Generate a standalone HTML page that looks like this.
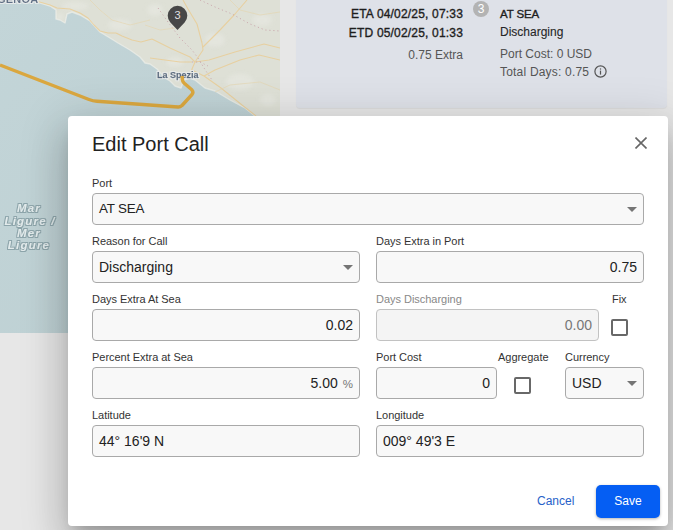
<!DOCTYPE html>
<html><head><meta charset="utf-8">
<style>
*{box-sizing:border-box;margin:0;padding:0}
html,body{width:673px;height:530px;overflow:hidden;background:#e7e7e7;font-family:"Liberation Sans",sans-serif;position:relative}
.abs{position:absolute}
#map{left:0;top:0;width:280px;height:333px;overflow:hidden;background:#bfd2d5}
#card{left:296px;top:-10px;width:371px;height:118px;background:#dee1e8;border-radius:4px;box-shadow:0 1px 1px rgba(0,0,0,0.05)}
.md{-webkit-text-stroke:0.35px currentColor}
.md2{-webkit-text-stroke:0.1px currentColor}
.ct{position:absolute;font-size:12px;white-space:nowrap;line-height:14px}
#dlg{left:68px;top:116px;width:600px;height:410px;background:#fff;border-radius:4px;box-shadow:0 11px 15px -7px rgba(0,0,0,0.2),0 24px 38px 3px rgba(0,0,0,0.14),0 9px 46px 8px rgba(0,0,0,0.12)}
.lbl{position:absolute;font-size:11px;color:#333;letter-spacing:-0.03px;white-space:nowrap;line-height:13px}
.inp{position:absolute;height:32px;border:1px solid #a9a9a9;border-radius:4px;background:#f8f8f8;font-size:14px;color:#222;line-height:30px;white-space:nowrap}
.arrow{position:absolute;width:0;height:0;border-left:5px solid transparent;border-right:5px solid transparent;border-top:5px solid #757575}
.cb{position:absolute;width:17px;height:17px;border:2px solid #686868;border-radius:2px;background:#fff}
</style></head>
<body>
<div id="map" class="abs">
<svg width="280" height="333" viewBox="0 0 280 333" style="position:absolute;left:0;top:0">
  <defs>
    <linearGradient id="wg" x1="0" y1="0" x2="1" y2="1">
      <stop offset="0" stop-color="#c3d5d8"/>
      <stop offset="1" stop-color="#bccfd2"/>
    </linearGradient>
    <filter id="halo" x="-20%" y="-20%" width="140%" height="140%">
      <feMorphology operator="dilate" radius="1" in="SourceAlpha" result="d"/>
      <feFlood flood-color="#e9ecec" flood-opacity="0.9"/>
      <feComposite in2="d" operator="in" result="h"/>
      <feMerge><feMergeNode in="h"/><feMergeNode in="SourceGraphic"/></feMerge>
    </filter>
    <filter id="halo2" x="-20%" y="-20%" width="140%" height="140%">
      <feMorphology operator="dilate" radius="0.8" in="SourceAlpha" result="d"/>
      <feFlood flood-color="#8aa2a8" flood-opacity="0.95"/>
      <feComposite in2="d" operator="in" result="h"/>
      <feMerge><feMergeNode in="h"/><feMergeNode in="SourceGraphic"/></feMerge>
    </filter>
  <filter id="blur2"><feGaussianBlur stdDeviation="2"/></filter>
    <clipPath id="landclip"><path d="M0,0 L27,0 L37,2 L50,6 L56,10 L56,19 L60,20 L65,23 L67,14 L72,12 L80,15 L90,21 L100,32 L110,38 L118,43 L130,50 L140,57 L145,63 L150,64 L157,69 L165,78 L170,81 L175,86 L181,88 L184,80 L190,78 L195,80 L205,88 L215,91 L230,100 L245,108 L255,116 L262,122 L280,135 L280,0 Z"/></clipPath>
  </defs>
  <rect width="280" height="333" fill="url(#wg)"/>
  <path d="M0,0 L27,0 L37,2 L50,6 L56,10 L56,19 L60,20 L65,23 L67,14 L72,12 L80,15 L90,21 L100,32 L110,38 L118,43 L130,50 L140,57 L145,63 L150,64 L157,69 L165,78 L170,81 L175,86 L181,88 L184,80 L190,78 L195,80 L205,88 L215,91 L230,100 L245,108 L255,116 L262,122 L280,135 L280,0 Z" fill="#dee0d6"/>
  <g fill="#e9eae4" opacity="0.55" filter="url(#blur2)" clip-path="url(#landclip)">
    <ellipse cx="75" cy="6" rx="14" ry="4"/>
    <ellipse cx="120" cy="25" rx="12" ry="6"/>
    <ellipse cx="155" cy="10" rx="8" ry="6"/>
    <ellipse cx="215" cy="40" rx="10" ry="7"/>
    <ellipse cx="240" cy="82" rx="14" ry="8"/>
    <ellipse cx="262" cy="20" rx="10" ry="6"/>
    <ellipse cx="175" cy="62" rx="9" ry="5"/>
    <ellipse cx="60" cy="17" rx="4" ry="4"/>
    <ellipse cx="268" cy="100" rx="8" ry="6"/>
  </g>
  <polyline points="27,0 37,2 50,6 56,10 56,19 60,20 65,23 67,14 72,12 80,15 90,21 100,32 110,38 118,43 130,50 140,57 145,63 150,64 157,69 165,78 170,81 175,86 181,88 184,80 190,78 195,80 205,88 215,91 230,100 245,108 255,116 262,122 280,135" fill="none" stroke="#eef0ea" stroke-width="1.4" opacity="0.7" stroke-linejoin="round"/>
  <g fill="none" stroke="#ebc98a" stroke-width="1.1" stroke-linejoin="round" opacity="0.7">
    <path d="M36,1 L50,5 L57,8 L70,9 L80,13 L88,18 L94,25 L100,31 L108,33 L116,33 L122,36 L132,40 L141,42 L152,39 L170,48 L190,57 L195,62"/>
    <path d="M183,0 L188,9 L197,24 L202,43 L203,50 L195,62 L192,69 L190,76"/>
    <path d="M203,47 L220,30 L235,14 L247,0"/>
    <path d="M195,62 L209,60 L235,52 L264,44 L280,48"/>
    <path d="M192,70 L204,76 L221,88 L242,105 L256,116"/>
    <path d="M204,76 L215,70 L240,60 L259,55 L280,60"/>
    <path d="M150,58 L165,60 L180,62 L192,62"/>
  </g>
  <g fill="none" stroke="#e5d6b0" stroke-width="0.8" opacity="0.8">
    <path d="M90,0 L100,10 L112,20 L130,25 L150,20"/>
    <path d="M215,92 L230,85 L260,82 L280,90"/>
    <path d="M230,0 L240,10 L260,15 L280,12"/>
    <path d="M145,25 L160,30 L175,28"/>
  </g>
  <g fill="none" stroke="#c79ea6" stroke-width="1" stroke-dasharray="1.2,2.8" opacity="0.8">
    <path d="M200,0 L215,7 L232,14 L250,24 L265,30 L280,31"/>
    <path d="M158,8 L168,22 L180,38 L192,50 L198,58 L204,68 L212,80"/>
    <path d="M192,62 L200,62 L208,66"/>
  </g>
  <text x="-3" y="3" font-family="Liberation Sans" font-weight="700" font-size="11" fill="#5f7087" letter-spacing="0.2" filter="url(#halo)">GENOA</text>
  <text x="157" y="78" font-family="Liberation Sans" font-weight="700" font-size="9" fill="#56697f" stroke="#56697f" stroke-width="0.25" filter="url(#halo)">La Spezia</text>
  <path d="M0,65 L89,99.5 Q93,101 97,101.3 L178,107 Q180,107.2 182,105.5 L192,94.5 Q194,92 191.5,89.5 L184,83 Q182.5,81.5 182.3,79 L182,76" fill="none" stroke="#daa73f" stroke-width="3.4" stroke-linejoin="round"/>
  <g font-family="Liberation Sans" font-weight="700" font-style="italic" font-size="11.5" fill="#e2ebec" letter-spacing="1.2" text-anchor="middle" filter="url(#halo2)">
    <text x="29" y="212">Mar</text>
    <text x="30" y="224.5">Ligure /</text>
    <text x="29" y="237">Mer</text>
    <text x="29" y="249">Ligure</text>
  </g>
  <path d="M177.5,29.9 L170.4,22.4 A9.8,9.8 0 1 1 184.6,22.4 Z" fill="#474747"/>
  <text x="177.5" y="19" font-family="Liberation Sans" font-size="11" fill="#e0e0e0" text-anchor="middle">3</text>
</svg>
</div>
<div id="card" class="abs">
  <div class="ct md" style="right:204px;top:17px;color:#1e1e1e;letter-spacing:0.18px">ETA 04/02/25, 07:33</div>
  <div class="ct md" style="right:204px;top:36px;color:#1e1e1e;letter-spacing:0.18px">ETD 05/02/25, 01:33</div>
  <div class="ct" style="right:204px;top:58px;color:#555">0.75 Extra</div>
  <div class="abs" style="left:177px;top:11px;width:16px;height:16px;border-radius:50%;background:#b3b3b3;color:#fff;font-size:12px;text-align:center;line-height:16px">3</div>
  <div class="ct md" style="left:204px;top:17px;color:#1e1e1e;font-size:11.5px;letter-spacing:-0.15px">AT SEA</div>
  <div class="ct md2" style="left:204px;top:35px;color:#262626">Discharging</div>
  <div class="ct" style="left:204px;top:57px;color:#555">Port Cost: 0 USD</div>
  <div class="ct" style="left:204px;top:75px;color:#555;letter-spacing:0.2px">Total Days: 0.75</div>
  <svg class="abs" style="left:298px;top:75px" width="13" height="13" viewBox="0 0 13 13"><circle cx="6.5" cy="6.5" r="5.6" fill="none" stroke="#555" stroke-width="1.2"/><rect x="5.9" y="5.6" width="1.2" height="4" fill="#555"/><rect x="5.9" y="3.4" width="1.2" height="1.2" fill="#555"/></svg>
</div>
<div id="dlg" class="abs">
  <div class="abs" style="left:24px;top:16px;font-size:20px;color:#222;line-height:24px;white-space:nowrap">Edit Port Call</div>
  <svg class="abs" style="left:567px;top:21px" width="12" height="12" viewBox="0 0 12 12"><path d="M0.5,0.5 L11.5,11.5 M11.5,0.5 L0.5,11.5" stroke="#666" stroke-width="1.6"/></svg>

  <div class="lbl" style="left:24px;top:61px">Port</div>
  <div class="inp" style="left:24px;top:77px;width:552px;padding-left:6px;font-size:13.4px;letter-spacing:-0.2px;line-height:29px">AT SEA</div>
  <div class="arrow" style="left:559px;top:91px"></div>

  <div class="lbl" style="left:24px;top:119px">Reason for Call</div>
  <div class="inp" style="left:24px;top:135px;width:268px;padding-left:6px">Discharging</div>
  <div class="arrow" style="left:275px;top:149px"></div>
  <div class="lbl" style="left:308px;top:119px">Days Extra in Port</div>
  <div class="inp" style="left:308px;top:135px;width:268px;padding-right:6px;text-align:right">0.75</div>

  <div class="lbl" style="left:24px;top:177px">Days Extra At Sea</div>
  <div class="inp" style="left:24px;top:193px;width:268px;padding-right:6px;text-align:right">0.02</div>
  <div class="lbl" style="left:308px;top:177px;color:#888">Days Discharging</div>
  <div class="inp" style="left:308px;top:193px;width:223px;padding-right:6px;text-align:right;color:#777;border-color:#c2c2c2;background:#f4f4f4">0.00</div>
  <div class="lbl" style="left:544px;top:177px">Fix</div>
  <div class="cb" style="left:543px;top:203px"></div>

  <div class="lbl" style="left:24px;top:235px">Percent Extra at Sea</div>
  <div class="inp" style="left:24px;top:251px;width:268px;padding-right:6px;text-align:right">5.00<span style="color:#777;font-size:11.5px;margin-left:5px">%</span></div>
  <div class="lbl" style="left:308px;top:235px">Port Cost</div>
  <div class="inp" style="left:308px;top:251px;width:121px;padding-right:6px;text-align:right">0</div>
  <div class="lbl" style="left:430px;top:235px">Aggregate</div>
  <div class="cb" style="left:446px;top:261px"></div>
  <div class="lbl" style="left:497px;top:235px">Currency</div>
  <div class="inp" style="left:497px;top:251px;width:79px;padding-left:6px">USD</div>
  <div class="arrow" style="left:559px;top:265px"></div>

  <div class="lbl" style="left:24px;top:293px">Latitude</div>
  <div class="inp" style="left:24px;top:309px;width:268px;padding-left:6px">44° 16'9 N</div>
  <div class="lbl" style="left:308px;top:293px">Longitude</div>
  <div class="inp" style="left:308px;top:309px;width:268px;padding-left:6px">009° 49'3 E</div>

  <div class="abs" style="left:469px;top:378px;font-size:12px;color:#2762c9;white-space:nowrap">Cancel</div>
  <div class="abs" style="left:528px;top:369px;width:64px;height:33px;background:#055ef3;border-radius:5px;color:#fff;font-size:12px;text-align:center;line-height:33px;box-shadow:0 1px 3px rgba(0,0,0,0.3)">Save</div>
</div>
</body></html>
